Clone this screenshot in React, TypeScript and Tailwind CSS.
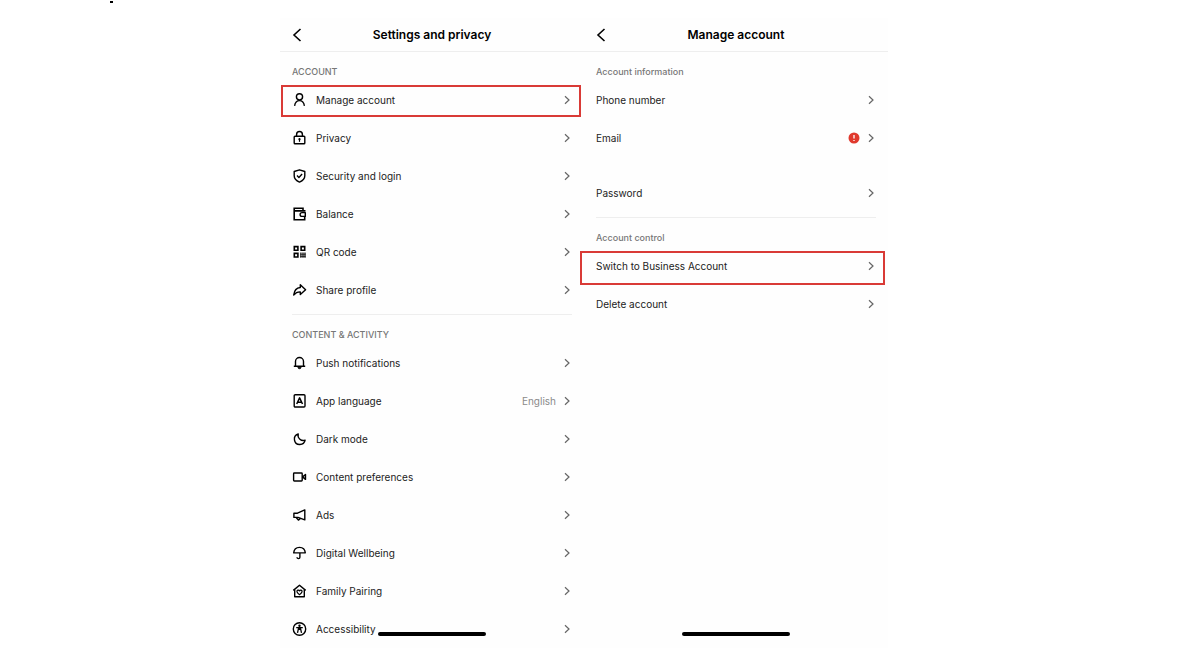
import type { ReactNode } from "react";
import clsx from "clsx";

type Row = {
  label: string;
  icon?: ReactNode;
  value?: string;
  alert?: boolean;
  highlight?: string;
  spaced?: boolean;
};

type Section = {
  title: string;
  rows: Row[];
};

function Icon({ children }: { children: ReactNode }) {
  return (
    <svg
      viewBox="0 0 16 16"
      fill="none"
      stroke="currentColor"
      strokeWidth="1.4"
      strokeLinejoin="round"
      className="h-4 w-4 shrink-0 text-black"
      aria-hidden="true"
    >
      {children}
    </svg>
  );
}

const icons = {
  user: (
    <Icon>
      <circle cx="7.5" cy="4.800" r="3.100" />
      <path d="M2.600 13.800c.5-3.400 2.300-5.200 4.900-5.200s4.400 1.800 4.900 5.200" />
    </Icon>
  ),
  lock: (
    <Icon>
      <rect x="2.2" y="6.2" width="10.6" height="7.6" rx="0.8" />
      <path d="M4.6 6V4.400a2.900 2.900 0 0 1 5.800 0V6" />
      <circle cx="7.5" cy="9.2" r="1.1" fill="currentColor" stroke="none" />
      <path d="M7.500 9v2.800" strokeWidth="1.2" />
    </Icon>
  ),
  shield: (
    <Icon>
      <path d="M7.5 1.8 12.8 3.5v4.2c0 3-2 5-5.3 6.4C4.2 12.7 2.2 10.7 2.2 7.7V3.5Z" />
      <path d="m5 7.600 1.900 1.800 3.200-3.300" />
    </Icon>
  ),
  wallet: (
    <Icon>
      <path d="M12.700 5.800V4.900H2.200M12.700 11v2.800H2.200V2.200h8.800v2.700" strokeWidth="1.6" strokeLinejoin="miter" />
      <path d="M13.300 6.600H10a1.900 1.900 0 0 0 0 3.800h3.300Z" />
    </Icon>
  ),
  qr: (
    <Icon>
      <g strokeLinejoin="miter">
        <path d="M2.3 2.600h3.600v3.600H2.300ZM9.100 2.600h3.600v3.600H9.100ZM2.300 9.400h3.600v3.600H2.300Z" strokeWidth="1.6" />
        <path d="M8.900 8.600v5.200M11 8.600v5.200M13 8.600v5.200" strokeWidth="1.2" />
        <path d="M8.300 10.300h5.300M8.300 12.500h5.300" strokeWidth=".6" />
      </g>
    </Icon>
  ),
  share: (
    <Icon>
      <path d="M8.300 2.700 13.600 7.800l-5.300 4.800V9.900C5.500 9.700 3.600 10.800 1.700 13 2.200 9 4.300 5.800 8.300 5.500Z" />
    </Icon>
  ),
  bell: (
    <Icon>
      <path d="M3.500 11V6.500a4 4 0 0 1 8 0V11M1.800 11.300h11.400" />
      <path d="M5.800 12.500a1.800 1.800 0 0 0 3.400 0Z" fill="currentColor" strokeWidth=".8" />
    </Icon>
  ),
  language: (
    <Icon>
      <rect x="2.2" y="1.8" width="10.800" height="12.2" rx="1" />
      <path d="M4.700 11 7.600 4.900 10.500 11M5.600 9.200h4" strokeWidth="1.5" />
    </Icon>
  ),
  moon: (
    <Icon>
      <path d="M6.200 3a5.400 5.400 0 1 0 6.900 6.200c-1.800.6-3.800.3-5.200-1C6.300 6.800 5.700 4.900 6.200 3Z" />
    </Icon>
  ),
  video: (
    <Icon>
      <rect x="1.600" y="4" width="8.600" height="8" rx=".7" />
      <path d="m10.600 7.900 2.900-2.400v4.900Z" />
    </Icon>
  ),
  megaphone: (
    <Icon>
      <path d="M12.800 2.900v10L6 10.400H1.900V6.200h3.600Z" />
      <path d="m4.200 10.500 2.200 2.600 2-1.700" />
    </Icon>
  ),
  umbrella: (
    <Icon>
      <path d="M1.700 7.900c.3-3.300 2.600-5.500 5.800-5.500s5.500 2.200 5.800 5.500Z" />
      <path d="M7.900 8v4.300c0 1.800-2.900 1.800-2.900 0" />
    </Icon>
  ),
  home: (
    <Icon>
      <path d="M1.300 7.400 7.500 2.200l6.200 5.200M2.700 6.500v7.200h9.600V6.500" />
      <path
        d="M7.500 11.700C5.600 10.500 4.800 9.500 4.900 8.300c.1-1.300 1.900-1.600 2.600-.4.700-1.200 2.500-.9 2.600.4.100 1.200-.7 2.200-2.600 3.400Z"
        strokeWidth="1.2"
      />
    </Icon>
  ),
  accessibility: (
    <Icon>
      <circle cx="7.500" cy="8" r="6.200" />
      <circle cx="7.500" cy="4.700" r="1.200" fill="currentColor" stroke="none" />
      <path d="M4.200 6.700h6.600M7.500 6.700v2.400M5.500 11.900l1.100-5M9.500 11.900l-1.100-5" strokeWidth="1.3" />
    </Icon>
  ),
};

const settingsSections: Section[] = [
  {
    title: "ACCOUNT",
    rows: [
      { label: "Manage account", icon: icons.user, highlight: "-left-[11px] -right-[9px] top-1 bottom-0.5" },
      { label: "Privacy", icon: icons.lock },
      { label: "Security and login", icon: icons.shield },
      { label: "Balance", icon: icons.wallet },
      { label: "QR code", icon: icons.qr },
      { label: "Share profile", icon: icons.share },
    ],
  },
  {
    title: "CONTENT & ACTIVITY",
    rows: [
      { label: "Push notifications", icon: icons.bell },
      { label: "App language", icon: icons.language, value: "English" },
      { label: "Dark mode", icon: icons.moon },
      { label: "Content preferences", icon: icons.video },
      { label: "Ads", icon: icons.megaphone },
      { label: "Digital Wellbeing", icon: icons.umbrella },
      { label: "Family Pairing", icon: icons.home },
      { label: "Accessibility", icon: icons.accessibility },
    ],
  },
];

const accountSections: Section[] = [
  {
    title: "Account information",
    rows: [
      { label: "Phone number" },
      { label: "Email", alert: true, spaced: true },
      { label: "Password" },
    ],
  },
  {
    title: "Account control",
    rows: [
      { label: "Switch to Business Account", highlight: "-left-4 -right-[9px] top-1 bottom-0" },
      { label: "Delete account" },
    ],
  },
];

function SettingsRow({ row }: { row: Row }) {
  return (
    <li className={clsx("relative", row.spaced && "mb-[17px]")}>
      <button type="button" className="flex h-[38px] w-full items-center gap-2 text-left text-[#222]">
        {row.icon}
        <span className="flex-1 text-[10px] leading-4">{row.label}</span>
        {row.value && <span className="text-[10px] leading-4 text-[#8a8a8a]">{row.value}</span>}
        {row.alert && (
          <svg viewBox="0 0 12 12" className="h-3 w-3" role="img" aria-label="Action needed">
            <circle cx="6" cy="6" r="5.5" fill="#e0392d" />
            <path d="M6 2.900v3.700M6 7.900v1.200" stroke="#fff" strokeWidth="1.3" />
          </svg>
        )}
        <svg
          viewBox="0 0 6 10"
          fill="none"
          stroke="#666"
          strokeWidth="1.2"
          className="mr-0.5 h-2.5 w-1.5 shrink-0"
          aria-hidden="true"
        >
          <path d="m1 1.200 4 3.800-4 3.800" />
        </svg>
      </button>
      {row.highlight && (
        <span className={clsx("pointer-events-none absolute z-10 border-2 border-[#d93a36]", row.highlight)} />
      )}
    </li>
  );
}

function Screen({ title, sections }: { title: string; sections: Section[] }) {
  return (
    <section className="relative bg-[#fefefe]">
      <header className="grid h-[34px] grid-cols-[24px_1fr_24px] items-center border-b border-[#eee] px-3">
        <button type="button" aria-label="Back">
          <svg viewBox="0 0 10 14" fill="none" stroke="#000" strokeWidth="1.6" className="h-3.5 w-2.5">
            <path d="M8.500 1 2 7l6.500 6" />
          </svg>
        </button>
        <h1 className="text-center text-[12px] leading-4 font-semibold text-black">{title}</h1>
      </header>
      <div className="px-3">
        {sections.map((section, i) => (
          <div key={section.title} className={clsx("pt-3", i > 0 && "mt-[5px] border-t border-[#eee]")}>
            <h2 className="mb-px text-[9px] leading-4 font-medium text-[#777]">{section.title}</h2>
            <ul>
              {section.rows.map(row => (
                <SettingsRow key={row.label} row={row} />
              ))}
            </ul>
          </div>
        ))}
      </div>
      {/* home indicator */}
      <div className="absolute inset-x-0 bottom-3 mx-auto h-1 w-[108px] rounded-full bg-black" />
    </section>
  );
}

export default function App() {
  return (
    <main className="relative min-h-screen bg-white pt-[18px] pr-8 font-['Inter',sans-serif]">
      <span className="absolute top-px left-[110px] h-0.5 w-[3px] bg-black" />
      <div className="mx-auto grid w-full max-w-[608px] grid-cols-2">
        <Screen title="Settings and privacy" sections={settingsSections} />
        <Screen title="Manage account" sections={accountSections} />
      </div>
    </main>
  );
}
